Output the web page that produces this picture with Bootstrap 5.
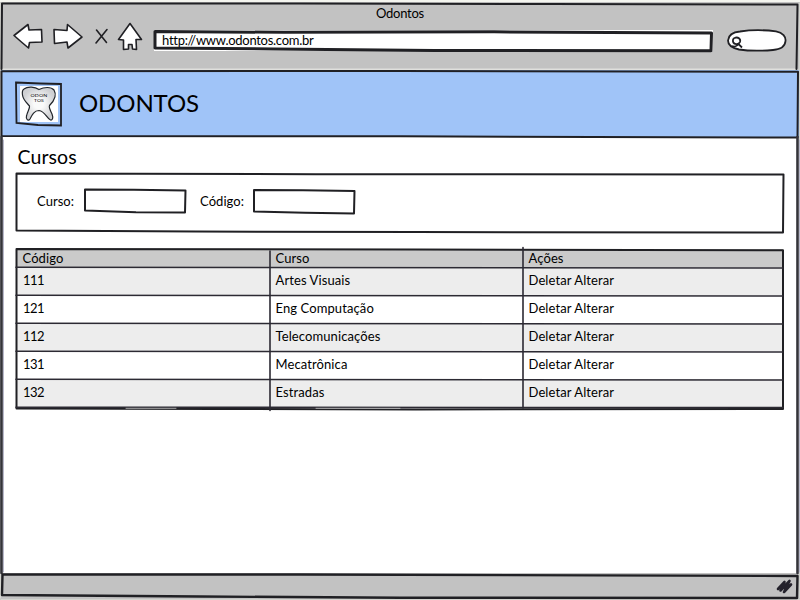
<!DOCTYPE html>
<html lang="pt-BR">
<head>
<meta charset="utf-8">
<meta name="viewport" content="width=device-width, initial-scale=1">
<title>Odontos</title>
<link href="https://cdn.jsdelivr.net/npm/bootstrap@5.3.0/dist/css/bootstrap.min.css" rel="stylesheet">
<style>
  body { font-family: Lato, "Liberation Sans", sans-serif; font-size: 13px; line-height: 18px; color: #000; letter-spacing: .1px; }
  .window { width: 800px; height: 600px; background: #fff; }
  .ink { position: absolute; left: 0; top: 0; width: 100%; height: 100%; overflow: visible; pointer-events: none; fill: none; stroke: #202024; stroke-width: 2; stroke-linejoin: round; stroke-linecap: round; }
  .chrome { height: 70px; background: #c2c2c2; }
  .chrome-title { height: 27px; padding-top: 4px; letter-spacing: -.25px; }
  .tools { height: 43px; padding-left: 13px; }
  .tools svg { flex: none; display: block; }
  .tool-icon { fill: #fff; stroke: #202024; stroke-width: 1.6; stroke-linejoin: round; stroke-linecap: round; }
  .address { width: 559px; height: 21px; margin: 3px 0 0 9px; padding: 1px 0 0 8px; background: #fff; letter-spacing: -.28px; }
  .finder { margin: 2px 0 0 13px; }
  .brandbar { height: 67px; background: #a0c4f8; padding-left: 15px; }
  .brandbar h1 { font-size: 24px; line-height: 30px; margin: 0 0 2px 17px; letter-spacing: -.1px; font-weight: 400; }
  .content-area { height: 436px; padding: 9px 16px 0; }
  .content-area h2 { font-size: 19.5px; line-height: 22px; margin: 0 0 5px 1.5px; font-weight: 400; }
  .filter { height: 59px; padding: 0 0 3px 21px; margin-bottom: 17px; }
  .filter label { letter-spacing: .05px; }
  .field { width: 102px; height: 24px; border: 0; padding: 0 6px; background: transparent; display: block; }
  .courses { width: 767px; table-layout: fixed; line-height: 18px; color: #000; }
  .courses > :not(caption) > * > * { padding: 0 0 0 6.5px; border: 0; font-weight: 400; box-shadow: none; color: #000; vertical-align: top; }
  .courses thead th { height: 18px; background: #cacaca; }
  .courses tbody td { height: 28px; padding-top: 4px; background: #fff; }
  .courses tbody td:first-child { letter-spacing: -.6px; padding-left: 7px; }
  .courses tbody tr:nth-child(odd) td { background: #ededed; }
  .courses a { color: #000; text-decoration: none; }
  .statusbar { height: 27px; background: #c2c2c2; }
</style>
<script src="https://cdn.jsdelivr.net/npm/bootstrap@5.3.0/dist/js/bootstrap.bundle.min.js"></script>
</head>
<body class="m-0 overflow-hidden">
<div class="window position-relative d-flex flex-column">

  <header class="chrome">
    <div class="chrome-title text-center">Odontos</div>
    <div class="tools d-flex align-items-start">
      <svg width="132" height="30" viewBox="13 22 132 30" style="margin-top:-5px" class="tool-icon" aria-hidden="true">
        <path d="M14 35.5 28 24.5 29 30 41.5 29.5 42 42 29.5 42.5 28.5 48 22 42.5Z"/>
        <path d="M54 29.5 67 30.5 67.5 24.5 82 37 68 48 67 42 54.5 43.5Z"/>
        <path d="M96.5 30 106.5 42.5M107 29.5 96 43" fill="none"/>
        <path d="M130 23.5 141.5 39.5 136 39.5 136.5 49.5 132.5 49 132 44.5 128.5 44.5 128.5 49 123.5 49.5 123.5 40 118.5 39.5Z"/>
      </svg>
      <div class="address position-relative">
        <svg class="ink" viewBox="0 0 559 21" preserveAspectRatio="none" style="stroke-width:3"><path d="M1 1.5 130 2.3 340 1.8 557.5 3 557 20.8 280 20.5 120 19 1 18Z"/></svg>
        http://www.odontos.com.br
      </div>
      <svg class="finder" width="62" height="24" viewBox="726 29 62 24" fill="#fff" stroke="#202024" stroke-width="1.8" aria-hidden="true">
        <path d="M740 31.5C750 30 765 30 776 31.3 783 32.5 786 37 785.5 41 785 47 780 49.5 773 50 761 51 749 51 739 49.5 732 48 728 45 728 40.5 728.5 35 733 32 740 31.5Z"/>
        <path d="M734.5 38C738 36.500 741 39 740 42 739 44.500 734.500 45 733.300 42.500 732.500 40.500 733 38.500 734.500 38M732 46C734 47 737 46 738.500 44L742 47.500"/>
      </svg>
    </div>
  </header>

  <div class="brandbar d-flex align-items-center">
    <svg width="47" height="46" viewBox="15 81 47 46" aria-hidden="true">
      <defs><radialGradient id="enamel"><stop offset=".3" stop-color="#fafafa"/><stop offset="1" stop-color="#cfd0d3"/></radialGradient></defs>
      <path d="M20 86H58V122H20Z" fill="#fff"/>
      <path d="M24 89C28 86 35 87 39 89.5 44 87 51 86.5 54 90 57 95 54 101 49.500 105.500 48.500 107 50 110 52 114 53.500 118 52.500 120.500 50.500 120 47 119 45 111 39 110.500 34 110.500 32 115 30 119 28.500 121.500 25.500 119.500 26.500 116 27.500 111 30 108.500 29.500 106 27 103 23 100 22.500 95 22 92 22.500 90 24 89Z" fill="url(#enamel)" stroke="#22262b" stroke-width="1.2"/>
      <text x="39" y="97" text-anchor="middle" font-size="4" textLength="17" lengthAdjust="spacingAndGlyphs">ODON</text>
      <text x="39" y="102" text-anchor="middle" font-size="4" textLength="10" lengthAdjust="spacingAndGlyphs">TOS</text>
      <path d="M16 82.5 40 83.5 61 84 61 125.5 38 125 16.5 123Z" fill="none" stroke="#202024" stroke-width="1.8"/>
    </svg>
    <h1>ODONTOS</h1>
  </div>

  <main class="content-area">
    <h2>Cursos</h2>
    <form class="filter position-relative d-flex align-items-center">
      <svg class="ink" viewBox="0 0 768 59" preserveAspectRatio="none"><path d="M.5 .5 300 1.2 767.5 1.5 767 59.5 400 59 180 58.5 .5 57.5Z"/></svg>
      <label for="curso">Curso:</label>
      <div class="position-relative" style="margin-left:10px">
        <svg class="ink" viewBox="0 0 102 24"><path d="M1 .5 50 .8 101.5 1.5 101 23.5 52 23.3 1 21.5Z"/></svg>
        <input class="field" id="curso" type="text">
      </div>
      <label for="codigo" style="margin-left:14px">Código:</label>
      <div class="position-relative" style="margin-left:9px">
        <svg class="ink" viewBox="0 0 102 24"><path d="M1 1 50 1.3 101.5 2 101 24.5 52 23.8 1 22.5Z"/></svg>
        <input class="field" id="codigo" type="text">
      </div>
    </form>
    <div class="position-relative">
      <table class="table courses mb-0">
        <colgroup><col style="width:253px"><col style="width:253px"><col></colgroup>
        <thead><tr><th>Código</th><th>Curso</th><th>Ações</th></tr></thead>
        <tbody>
          <tr><td>111</td><td>Artes Visuais</td><td><a href="#">Deletar</a> <a href="#">Alterar</a></td></tr>
          <tr><td>121</td><td>Eng Computação</td><td><a href="#">Deletar</a> <a href="#">Alterar</a></td></tr>
          <tr><td>112</td><td>Telecomunicações</td><td><a href="#">Deletar</a> <a href="#">Alterar</a></td></tr>
          <tr><td>131</td><td>Mecatrônica</td><td><a href="#">Deletar</a> <a href="#">Alterar</a></td></tr>
          <tr><td>132</td><td>Estradas</td><td><a href="#">Deletar</a> <a href="#">Alterar</a></td></tr>
        </tbody>
      </table>
      <svg class="ink" viewBox="0 0 768 158" preserveAspectRatio="none">
        <path d="M.5 0 400 .5 767 1.3 767 160 400 160.5 200 160 .5 159.5Z"/>
        <g stroke-width="1.6" stroke="#2c2a33">
          <path d="M0 18.3 767 19M0 46.3 767 47M0 74.3 767 75M0 102.3 767 103M0 130.3 767 131M0 158.3 767 158.5"/>
          <path d="M254 2V161.5M507 -1.5V159"/>
        </g>
        <path d="M110 159.300H160M300 159.300H384" stroke="#c9c9c9" stroke-width=".8"/>
      </svg>
    </div>
  </main>

  <footer class="statusbar"></footer>

  <svg class="ink" viewBox="0 0 800 600" aria-hidden="true">
    <path d="M0 .5H800" stroke="#f4f5ef" stroke-width="3"/>
    <path d="M.5 3V598M799.5 3V598M1 599.5H800" stroke="#d4d5d0" stroke-width="1"/>
    <path d="M2 69.2H798" stroke="#eeeeea" stroke-width="1"/>
    <path d="M2 3.5 300 3.5 550 4 797.5 4.5M2 3.5 1.5 69M797.5 4.5 796.5 69"/>
    <path d="M1.5 71.3 400 71 798 71.8 797.5 137.5 400 136.3 1.5 136Z"/>
    <path d="M1.5 137V573M797.5 137V573" stroke-width="2.6" stroke="#34343a"/>
    <path d="M3.5 140V572M799.5 140V572" stroke-width="1" stroke="#b9b9cb"/>
    <path d="M2.5 574.5 300 574.5 797.5 576 797 598 400 597.7 200 596.5 2 595Z" stroke-width="2.4"/>
    <path d="M778 589 784.5 582 780.5 590.5 789.5 581 784 592 791 584.5" stroke="#24222c" stroke-width="2.6"/>
  </svg>
</div>
</body>
</html>
